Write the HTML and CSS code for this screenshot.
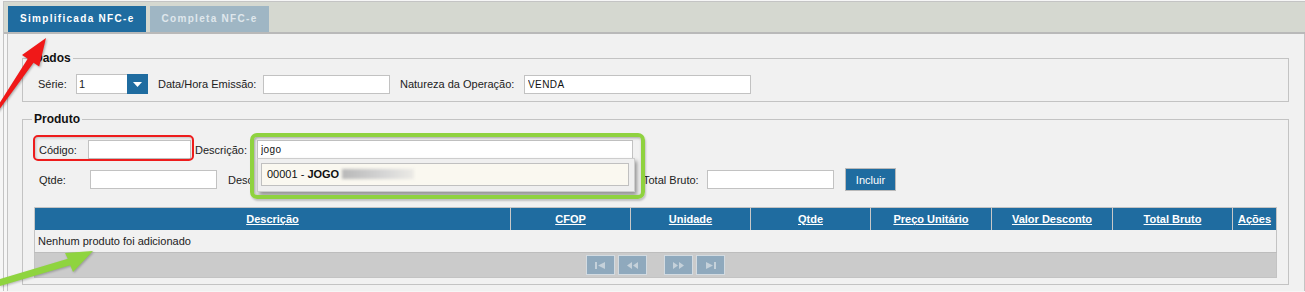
FILE: index.html
```html
<!DOCTYPE html>
<html lang="pt-BR">
<head>
    <meta charset="UTF-8">
    <title>NFC-e</title>
    <link rel="stylesheet" href="styles.css">
</head>
<body>
    <div class="frame">
        <div class="tab-bar">
            <a class="tab tab-active">Simplificada NFC-e</a>
            <a class="tab">Completa NFC-e</a>
        </div>

        <div class="panel">
            <!-- Dados -->
            <fieldset class="box box-dados">
                <legend>Dados</legend>
                <div class="row row-dados">
                    <label class="lbl lbl-serie">Série:</label>
                    <div class="combo">
                        <span class="combo-value">1</span>
                        <span class="combo-btn">
                            <svg width="9" height="5" viewBox="0 0 9 5"><path d="M0 0h9L4.5 5z" fill="#fff"/></svg>
                        </span>
                    </div>
                    <label class="lbl lbl-data">Data/Hora Emissão:</label>
                    <input class="field field-data" type="text">
                    <label class="lbl lbl-natureza">Natureza da Operação:</label>
                    <input class="field field-natureza" type="text" value="VENDA">
                </div>
            </fieldset>

            <!-- Produto -->
            <fieldset class="box box-produto">
                <legend>Produto</legend>
                <div class="row row-one">
                    <label class="lbl lbl-codigo">Código:</label>
                    <input class="field field-codigo" type="text">
                    <label class="lbl lbl-descricao">Descrição:</label>
                    <input class="field field-descricao" type="text" value="jogo">

                    <div class="mark mark-red"></div>
                    <div class="suggest">
                        <div class="suggest-item">00001 - <b>JOGO</b> <span class="blurred"></span></div>
                    </div>
                    <div class="mark mark-green"></div>
                </div>

                <div class="row row-two">
                    <label class="lbl lbl-qtde">Qtde:</label>
                    <input class="field field-qtde" type="text">
                    <label class="lbl lbl-desconto">Desc<span class="under-suggest">onto:</span></label>
                    <input class="field field-desconto" type="text">
                    <label class="lbl lbl-total">Total Bruto:</label>
                    <input class="field field-total" type="text">
                    <button class="btn-incluir">Incluir</button>
                </div>

                <table class="grid">
                    <colgroup>
                        <col style="width: 476px">
                        <col style="width: 120px">
                        <col style="width: 120px">
                        <col style="width: 120px">
                        <col style="width: 121px">
                        <col style="width: 121px">
                        <col style="width: 120px">
                        <col style="width: 44px">
                    </colgroup>
                    <thead>
                        <tr>
                            <th><a>Descrição</a></th>
                            <th><a>CFOP</a></th>
                            <th><a>Unidade</a></th>
                            <th><a>Qtde</a></th>
                            <th><a>Preço Unitário</a></th>
                            <th><a>Valor Desconto</a></th>
                            <th><a>Total Bruto</a></th>
                            <th><a>Ações</a></th>
                        </tr>
                    </thead>
                    <tbody>
                        <tr class="empty-row">
                            <td colspan="8">Nenhum produto foi adicionado</td>
                        </tr>
                        <tr class="pager-row">
                            <td colspan="8">
                                <div class="pager">
                                    <span class="pg-btn"><svg width="11" height="7" viewBox="0 0 11 7"><path d="M0 0h2v7H0zM10 0L3 3.5 10 7z"/></svg></span>
                                    <span class="pg-btn"><svg width="11" height="7" viewBox="0 0 11 7"><path d="M5 0L0 3.5 5 7zM11 0L6 3.5 11 7z"/></svg></span>
                                    <span class="pg-space"></span>
                                    <span class="pg-btn"><svg width="11" height="7" viewBox="0 0 11 7"><path d="M0 0l5 3.5L0 7zM6 0l5 3.5L6 7z"/></svg></span>
                                    <span class="pg-btn"><svg width="11" height="7" viewBox="0 0 11 7"><path d="M1 0l7 3.5L1 7zM9 0h2v7H9z"/></svg></span>
                                </div>
                            </td>
                        </tr>
                    </tbody>
                </table>
            </fieldset>
        </div>
    </div>

    <!-- annotation arrows -->
    <svg class="arrow" width="100" height="292" viewBox="0 0 100 292">
        <polygon class="arrow-red" points="46,38 22,55 27.7,58.8 -4.2,109 -1.8,111 33.5,62.8 39.2,66.6"/>
        <polygon class="arrow-green" points="93,251 65,253 67.8,258.7 0,279 0,286 70.2,265.3 73,272"/>
    </svg>
</body>
</html>
```

FILE: styles.css
```css
/* NFC-e emissao */
body {
    margin: 0;
    background-color: #f6f6f6;
    font-family: "Liberation Sans", Arial, sans-serif;
    font-size: 11px;
    color: #222;
    position: relative;
    overflow: hidden;
}

.frame {
    margin: 1px 0 0 3px;
    border-top: 1px solid #c4c4c4;
    border-left: 1px solid #c4c4c4;
}

.tab-bar {
    display: flex;
    gap: 4px;
    height: 26px;
    padding: 4px 0 0 4px;
    background-color: #d5d8d0;
    border-bottom: 2px solid #b9b9b9;
}

.tab {
    display: block;
    height: 26px;
    line-height: 26px;
    padding: 0 11px 0 12px;
    font-size: 10px;
    font-weight: bold;
    letter-spacing: 1.3px;
    color: #dfe7ec;
    background-color: #9fb6c4;
}

.tab-active {
    color: #fff;
    background-color: #1f6ca0;
}

.panel {
    margin-left: 3px;
    padding: 17px 0 6px 0;
    background-color: #f1f1f1;
    border-left: 1px solid #c4c4c4;
    border-right: 1px solid #c4c4c4;
}

.box {
    margin: 0 15px 0 14px;
    padding: 8px 10px 7px 11px;
    border: 1px solid #c3c3c3;
    min-width: 0;
}

.box legend {
    padding: 0 2px;
    margin-left: -2px;
    font-size: 12px;
    line-height: 15px;
    font-weight: bold;
    color: #111;
}

.box-produto {
    margin-top: 10px;
    padding-top: 13px;
    padding-bottom: 6px;
}

.row {
    display: flex;
    align-items: center;
}

.row-dados {
    height: 20px;
    padding-left: 4px;
}

.row-one {
    position: relative;
    height: 19px;
    padding-left: 5px;
}

.row-two {
    height: 23px;
    padding-left: 5px;
    margin-top: 9px;
}

.lbl {
    flex: none;
    white-space: nowrap;
}

.lbl-serie { width: 38px; }
.lbl-data { width: 105px; margin-left: 10px; }
.lbl-natureza { width: 124px; margin-left: 10px; }
.lbl-codigo { width: 49px; }
.lbl-descricao { width: 62px; margin-left: 4px; }
.lbl-qtde { width: 51px; }
.lbl-desconto { width: 62px; margin-left: 11px; }
.lbl-total { width: 64px; margin-left: 12px; }

/* part of the label that sits under the open suggestion list */
.under-suggest {
    visibility: hidden;
}

.field {
    flex: none;
    box-sizing: border-box;
    height: 19px;
    margin: 0;
    padding: 0 3px;
    border: 1px solid #c2c2c2;
    background-color: #fff;
    font-family: "Liberation Sans", Arial, sans-serif;
    font-size: 10px;
    letter-spacing: 0.4px;
    color: #111;
}

.field-data { width: 127px; }
.field-natureza { width: 227px; }
.field-codigo { width: 103px; }
.field-descricao { width: 376px; }
.field-qtde { width: 127px; }
.field-desconto { width: 341px; }
.field-total { width: 127px; }

.combo {
    flex: none;
    display: flex;
    width: 72px;
    height: 20px;
    box-sizing: border-box;
    border: 1px solid #c2c2c2;
    background-color: #fff;
}

.combo-value {
    flex: 1;
    padding-left: 2px;
    line-height: 18px;
    font-size: 11px;
}

.combo-btn {
    width: 21px;
    margin: -1px -1px -1px 0;
    display: flex;
    align-items: center;
    justify-content: center;
    background-color: #1f6ca0;
}

.btn-incluir {
    flex: none;
    width: 51px;
    height: 23px;
    margin-left: 11px;
    padding: 0;
    border: 1px solid #b9b9b9;
    background-color: #1f6ca0;
    color: #fff;
    font-family: "Liberation Sans", Arial, sans-serif;
    font-size: 11px;
}

/* annotation marks over the form */
.mark {
    position: absolute;
    box-sizing: border-box;
    pointer-events: none;
}

.mark-red {
    left: -1px;
    top: -5px;
    width: 161px;
    height: 26px;
    border: 2px solid #ee1c1c;
    border-radius: 5px;
    box-shadow: inset 1px 1px 3px rgba(0, 0, 0, 0.2);
}

.mark-green {
    left: 216px;
    top: -7px;
    width: 395px;
    height: 66px;
    border: 4px solid #8fd23f;
    border-radius: 7px;
    box-shadow: inset 1px 1px 3px rgba(0, 0, 0, 0.35), 1px 2px 2px rgba(0, 0, 0, 0.2);
    z-index: 3;
}

.suggest {
    position: absolute;
    left: 223px;
    top: 18px;
    width: 378px;
    height: 34px;
    box-sizing: border-box;
    padding: 4px 5px 0 3px;
    background-color: #efefef;
    border: 1px solid #cdcdcd;
    box-shadow: 2px 3px 4px rgba(0, 0, 0, 0.4);
    z-index: 2;
}

.suggest-item {
    height: 23px;
    box-sizing: border-box;
    padding-left: 5px;
    line-height: 21px;
    border: 1px solid #c0c0c0;
    background-color: #faf8f0;
    font-size: 11px;
    color: #111;
}

.blurred {
    display: inline-block;
    width: 72px;
    height: 10px;
    vertical-align: -1px;
    background: linear-gradient(90deg, #b8b8b8, #d6d6d6 60%, #ecebe6);
    filter: blur(1.5px);
}

/* grid */
.grid {
    margin-top: 16px;
    width: 1243px;
    table-layout: fixed;
    border-collapse: collapse;
    border: 1px solid #c3c3c3;
}

.grid th {
    height: 22px;
    padding: 0;
    background-color: #1f6ca0;
    border-left: 1px solid #c8c8c8;
    font-size: 11px;
    font-weight: bold;
    text-align: center;
}

.grid th a {
    color: #fff;
    text-decoration: underline;
}

.empty-row td {
    height: 22px;
    padding: 0 0 0 3px;
    background-color: #f1f1f1;
    border-bottom: 1px solid #bdbdbd;
}

.pager-row td {
    height: 24px;
    padding: 0;
    background-color: #cbcbcb;
}

.pager {
    display: flex;
    justify-content: center;
    gap: 3px;
}

.pg-btn {
    width: 29px;
    height: 20px;
    box-sizing: border-box;
    display: flex;
    align-items: center;
    justify-content: center;
    background-color: #8fa9bd;
    border: 1px solid #d3dbe1;
}

.pg-btn svg {
    fill: #c5d1da;
}

.pg-space {
    width: 11px;
}

.arrow {
    position: absolute;
    left: 0;
    top: 0;
    pointer-events: none;
}

.arrow-red {
    fill: #f01818;
    filter: drop-shadow(1px 1px 1px rgba(0, 0, 0, 0.3));
}

.arrow-green {
    fill: #8fd43f;
    filter: drop-shadow(1px 1px 1px rgba(0, 0, 0, 0.25));
}
```
